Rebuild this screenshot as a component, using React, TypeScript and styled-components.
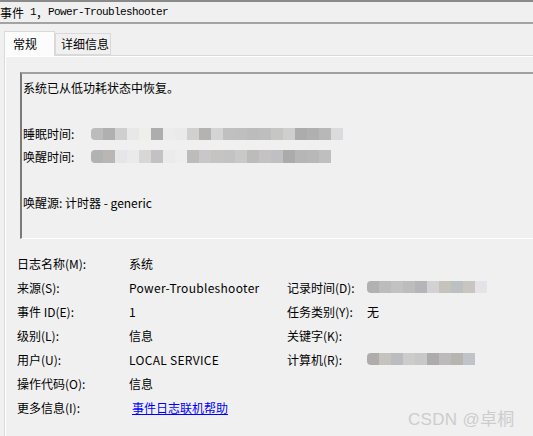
import React from "react"
import styled, { createGlobalStyle } from "styled-components"

const GlobalStyle = createGlobalStyle`
    html, body {
        margin: 0;
        padding: 0;
        background: #f0f0f0;
        overflow: hidden;
    }
    body {
        font-family: "Noto Sans CJK SC", "Noto Sans", sans-serif;
        font-size: 12px;
        color: #000;
    }
`

const Window = styled.div`
    position: relative;
    width: 533px;
    height: 436px;
    background: #f0f0f0;
    overflow: hidden;
`

const TitleBar = styled.div`
    height: 20px;
    border-top: 2px solid #8a8a8a;
    border-bottom: 2px solid #a3a3a3;
    display: flex;
    align-items: center;
    white-space: pre;
    font-family: "Liberation Mono", "Noto Sans CJK SC", monospace;
    font-size: 11px;
    letter-spacing: -0.6px;
`

const TitleCjk = styled.span`
    font-family: "Noto Sans CJK SC", sans-serif;
    font-size: 12px;
    letter-spacing: 0;
`

const TabStrip = styled.div`
    display: flex;
    align-items: flex-end;
    height: 31px;
    padding: 0 0 0 4px;
`

const Tab = styled.div<{ $active?: boolean }>`
    box-sizing: border-box;
    height: ${(p) => (p.$active ? "25px" : "22px")};
    width: ${(p) => (p.$active ? "51px" : "56px")};
    padding-left: ${(p) => (p.$active ? "8px" : "5px")};
    padding-top: ${(p) => (p.$active ? "2px" : "0")};
    line-height: 20px;
    font-size: 12px;
    background: ${(p) => (p.$active ? "#fcfcfc" : "#f0f0f0")};
    border: 1px solid #d9d9d9;
    border-bottom: ${(p) => (p.$active ? "none" : "1px solid #d9d9d9")};
    margin-bottom: ${(p) => (p.$active ? "-1px" : "0")};
    position: relative;
    z-index: ${(p) => (p.$active ? 1 : 0)};
`

const Panel = styled.div`
    margin-left: 4px;
    border-top: 1px solid #d9d9d9;
    border-left: 1px solid #d9d9d9;
    box-shadow: inset 1px 1px 0 #ffffff;
    padding: 16px 0 0 15px;
    height: 380px;
`

const DescriptionBox = styled.div`
    height: 162px;
    border-top: 2px solid #a0a0a0;
    border-left: 2px solid #7a7a7a;
    border-bottom: 1px solid #ffffff;
    margin-right: -20px;
    padding: 2px 0 0 1px;
    line-height: 23px;
`

const Line = styled.div`
    display: flex;
    align-items: center;
    height: 23px;
    white-space: nowrap;
`

const TimeLabel = styled.span`
    width: 68px;
`

const Mosaic = styled.div<{ $h: number }>`
    display: flex;
    height: ${(p) => p.$h}px;
    border-radius: 4px 0 0 4px;
    overflow: hidden;
`

const Cell = styled.span`
    display: block;
    width: 12px;
    height: 100%;
`

const Details = styled.div`
    display: grid;
    grid-template-columns: 112px 158px 80px 1fr;
    grid-auto-rows: 24px;
    align-items: center;
    margin: 12px 0 0 -3px;
    white-space: nowrap;
`

const Label = styled.span``

const Value = styled.span<{ $latin?: boolean }>`
    letter-spacing: ${(p) => (p.$latin ? "0.3px" : "0")};
`

const HelpLink = styled.a`
    color: #0000ff;
    text-decoration: underline;
    margin-left: 3px;
    cursor: pointer;
`

const Watermark = styled.div`
    position: absolute;
    left: 408px;
    top: 405px;
    font-family: "Liberation Sans", "Noto Sans CJK SC", sans-serif;
    font-size: 17px;
    font-weight: 400;
    color: #cdcdcd;
    letter-spacing: 0.3px;
`

const sleepCells = [
    "#bcbcbc", "#b0b0b0", "#cfcfcf", "#e8e8e8", "#eeeeea", "#adadad", "#ececec",
    "#eaeaea", "#d0d0d0", "#b5b2b2", "#d4d4d4", "#c0c0c0", "#bfbfbf", "#bcbcbc",
    "#bebebe", "#c6c6c4", "#cfcfcf", "#acacac", "#b0b0b0", "#b8b8b8", "#d9dbdd",
]
const wakeCells = [
    "#b1b3b3", "#bab6b4", "#e6e6e9", "#eaeaea", "#d8d7d5", "#c2c2c4", "#ebebeb",
    "#eeeeee", "#bdbcba", "#c8c8ca", "#c5c4c2", "#c3c3c3", "#c9c9c9", "#bcbcba",
    "#c4c2c2", "#c0c0c4", "#ababab", "#b6b6b6", "#b8b8b8", "#bfbfbf",
]
const recordCells = [
    "#b2b0b0", "#bcbcbe", "#c2c2c2", "#bdbdbd", "#b5b5b9", "#d2d2d2", "#c6c3bc",
    "#bcc0c2", "#c9c6c2", "#e4e4e8",
]
const computerCells = [
    "#b0acac", "#c6c3bf", "#bbbcc0", "#cccccc", "#c8c8c8", "#aeabab", "#bcbaba",
    "#b8b4b0", "#c0c4c8",
]

function Blur({ cells, h }: { cells: string[]; h: number }) {
    return (
        <Mosaic $h={h}>
            {cells.map((c, i) => (
                <Cell key={i} style={{ background: c }} />
            ))}
        </Mosaic>
    )
}

export default function App() {
    return (
        <Window>
            <GlobalStyle />
            <TitleBar>
                <TitleCjk>事件</TitleCjk> 1<TitleCjk>，</TitleCjk>Power-Troubleshooter
            </TitleBar>
            <TabStrip>
                <Tab $active>常规</Tab>
                <Tab>详细信息</Tab>
            </TabStrip>
            <Panel>
                <DescriptionBox>
                    <Line>系统已从低功耗状态中恢复。</Line>
                    <Line />
                    <Line>
                        <TimeLabel>睡眠时间:</TimeLabel>
                        <Blur cells={sleepCells} h={12} />
                    </Line>
                    <Line>
                        <TimeLabel>唤醒时间:</TimeLabel>
                        <Blur cells={wakeCells} h={13} />
                    </Line>
                    <Line />
                    <Line>唤醒源: 计时器 - generic</Line>
                </DescriptionBox>
                <Details>
                    <Label>日志名称(M):</Label>
                    <Value>系统</Value>
                    <span />
                    <span />

                    <Label>来源(S):</Label>
                    <Value $latin>Power-Troubleshooter</Value>
                    <Label>记录时间(D):</Label>
                    <Blur cells={recordCells} h={12} />

                    <Label>事件 ID(E):</Label>
                    <Value>1</Value>
                    <Label>任务类别(Y):</Label>
                    <Value>无</Value>

                    <Label>级别(L):</Label>
                    <Value>信息</Value>
                    <Label>关键字(K):</Label>
                    <span />

                    <Label>用户(U):</Label>
                    <Value $latin>LOCAL SERVICE</Value>
                    <Label>计算机(R):</Label>
                    <Blur cells={computerCells} h={12} />

                    <Label>操作代码(O):</Label>
                    <Value>信息</Value>
                    <span />
                    <span />

                    <Label>更多信息(I):</Label>
                    <Value>
                        <HelpLink>事件日志联机帮助</HelpLink>
                    </Value>
                </Details>
            </Panel>
            <Watermark>CSDN @卓桐</Watermark>
        </Window>
    )
}
